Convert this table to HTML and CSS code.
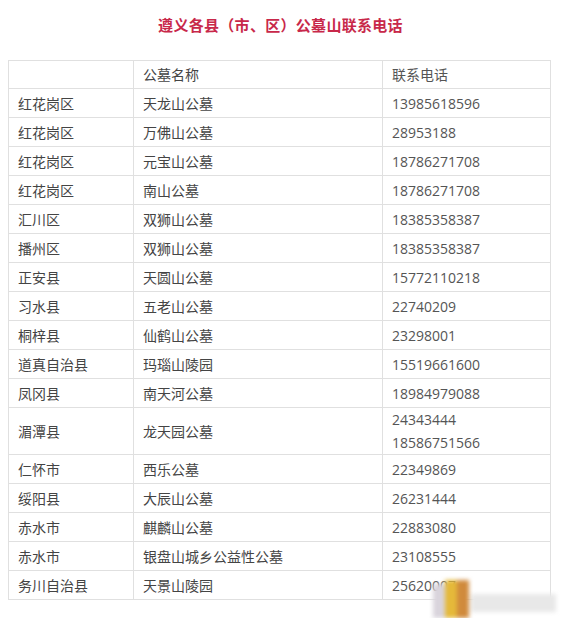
FILE: index.html
```html
<!DOCTYPE html>
<html lang="zh-CN">
<head>
<meta charset="utf-8">
<link rel="stylesheet" href="styles.css">
</head>
<body>
<div class="page">
  <h1 class="title">遵义各县（市、区）公墓山联系电话</h1>
  <table class="tbl">
    <colgroup><col class="c1"><col class="c2"><col class="c3"></colgroup>
    <tr><td></td><td>公墓名称</td><td>联系电话</td></tr>
    <tr><td>红花岗区</td><td>天龙山公墓</td><td>13985618596</td></tr>
    <tr><td>红花岗区</td><td>万佛山公墓</td><td>28953188</td></tr>
    <tr><td>红花岗区</td><td>元宝山公墓</td><td>18786271708</td></tr>
    <tr><td>红花岗区</td><td>南山公墓</td><td>18786271708</td></tr>
    <tr><td>汇川区</td><td>双狮山公墓</td><td>18385358387</td></tr>
    <tr><td>播州区</td><td>双狮山公墓</td><td>18385358387</td></tr>
    <tr><td>正安县</td><td>天圆山公墓</td><td>15772110218</td></tr>
    <tr><td>习水县</td><td>五老山公墓</td><td>22740209</td></tr>
    <tr><td>桐梓县</td><td>仙鹤山公墓</td><td>23298001</td></tr>
    <tr><td>道真自治县</td><td>玛瑙山陵园</td><td>15519661600</td></tr>
    <tr><td>凤冈县</td><td>南天河公墓</td><td>18984979088</td></tr>
    <tr><td>湄潭县</td><td>龙天园公墓</td><td>24343444<br>18586751566</td></tr>
    <tr><td>仁怀市</td><td>西乐公墓</td><td>22349869</td></tr>
    <tr><td>绥阳县</td><td>大辰山公墓</td><td>26231444</td></tr>
    <tr><td>赤水市</td><td>麒麟山公墓</td><td>22883080</td></tr>
    <tr><td>赤水市</td><td>银盘山城乡公益性公墓</td><td>23108555</td></tr>
    <tr><td>务川自治县</td><td>天景山陵园</td><td>25620007</td></tr>
  </table>
  <div class="mark"><span class="m1"></span><span class="m2"></span><span class="m3"></span></div>
</div>
</body>
</html>
```

FILE: styles.css
```css
html, body { margin: 0; padding: 0; background: #fff; }
body { font-family: "Noto Sans CJK SC", "Noto Sans", sans-serif; color: #444; }
.page { position: relative; width: 561px; height: 618px; overflow: hidden; }
.title {
  margin: 0;
  padding-top: 14px;
  height: 47px;
  box-sizing: border-box;
  text-align: center;
  font-size: 15px;
  line-height: 22px;
  font-weight: bold;
  color: #c8284a;
  letter-spacing: 0.3px;
}
.tbl {
  margin-left: 8px;
  margin-top: 13px;
  width: 542px;
  border-collapse: collapse;
  table-layout: fixed;
  font-size: 14px;
}
.c1 { width: 125px; }
.c2 { width: 249px; }
.c3 { width: 168px; }
.tbl td {
  border: 1px solid #e0e0e0;
  height: 29px;
  box-sizing: border-box;
  padding: 0 0 0 9px;
  line-height: 23px;
  vertical-align: middle;
  color: #444;
  font-family: "Noto Sans CJK SC", sans-serif;
}
.tbl td:nth-child(3) { font-family: "Open Sans", "Noto Sans CJK SC", sans-serif; font-size: 14px; color: #555; }
.tbl tr:first-child td { height: 28px; }
.mark { position: absolute; left: 433px; top: 580px; width: 128px; height: 38px; filter: blur(2px); }
.mark span { position: absolute; display: block; }
.m1 { left: 0; top: 4px; width: 14px; height: 34px; background: #d9d4dc; }
.m2 { left: 12px; top: 0; width: 24px; height: 38px; background: linear-gradient(90deg, #e5b93a 0 50%, #d08a3c 50% 100%); }
.m3 { left: 38px; top: 14px; width: 85px; height: 18px; background: #e8e8e8; }
```
